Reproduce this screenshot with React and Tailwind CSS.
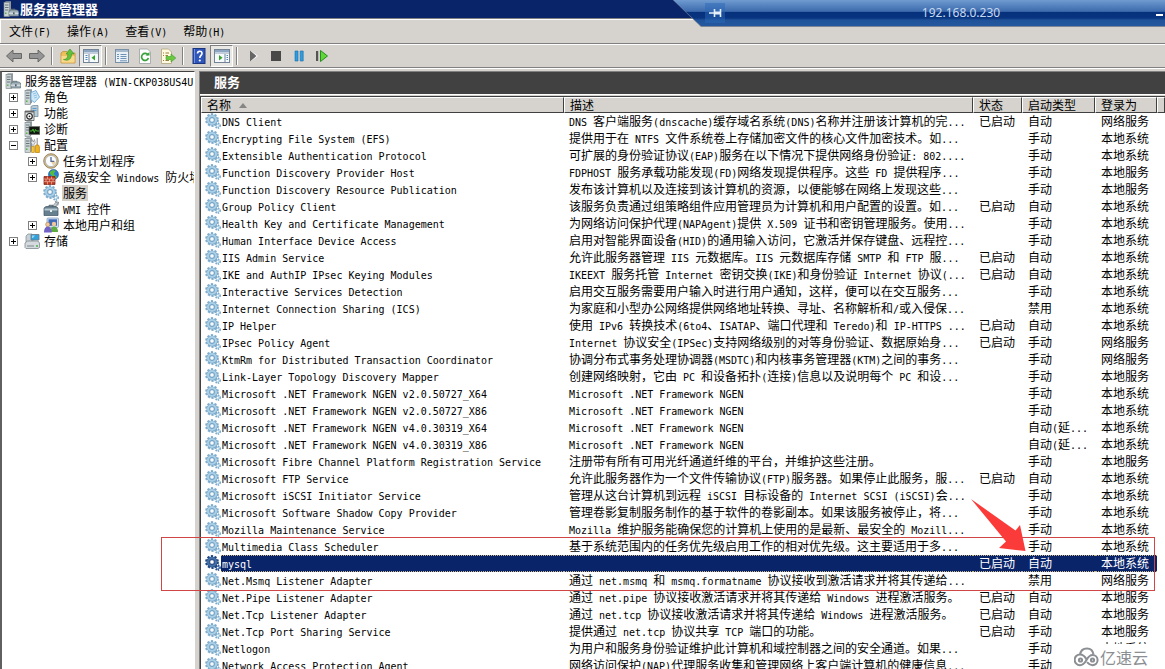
import React from 'react';

const services = [
  ['DNS Client', 'DNS 客户端服务(dnscache)缓存域名系统(DNS)名称并注册该计算机的完...', '已启动', '自动', '网络服务'],
  ['Encrypting File System (EFS)', '提供用于在 NTFS 文件系统卷上存储加密文件的核心文件加密技术。如...', '', '手动', '本地系统'],
  ['Extensible Authentication Protocol', '可扩展的身份验证协议(EAP)服务在以下情况下提供网络身份验证: 802....', '', '手动', '本地系统'],
  ['Function Discovery Provider Host', 'FDPHOST 服务承载功能发现(FD)网络发现提供程序。这些 FD 提供程序...', '', '手动', '本地服务'],
  ['Function Discovery Resource Publication', '发布该计算机以及连接到该计算机的资源，以便能够在网络上发现这些...', '', '手动', '本地服务'],
  ['Group Policy Client', '该服务负责通过组策略组件应用管理员为计算机和用户配置的设置。如...', '已启动', '自动', '本地系统'],
  ['Health Key and Certificate Management', '为网络访问保护代理(NAPAgent)提供 X.509 证书和密钥管理服务。使用...', '', '手动', '本地系统'],
  ['Human Interface Device Access', '启用对智能界面设备(HID)的通用输入访问，它激活并保存键盘、远程控...', '', '手动', '本地系统'],
  ['IIS Admin Service', '允许此服务器管理 IIS 元数据库。IIS 元数据库存储 SMTP 和 FTP 服...', '已启动', '自动', '本地系统'],
  ['IKE and AuthIP IPsec Keying Modules', 'IKEEXT 服务托管 Internet 密钥交换(IKE)和身份验证 Internet 协议(...', '已启动', '自动', '本地系统'],
  ['Interactive Services Detection', '启用交互服务需要用户输入时进行用户通知，这样，便可以在交互服务...', '', '手动', '本地系统'],
  ['Internet Connection Sharing (ICS)', '为家庭和小型办公网络提供网络地址转换、寻址、名称解析和/或入侵保...', '', '禁用', '本地系统'],
  ['IP Helper', '使用 IPv6 转换技术(6to4、ISATAP、端口代理和 Teredo)和 IP-HTTPS ...', '已启动', '自动', '本地系统'],
  ['IPsec Policy Agent', 'Internet 协议安全(IPSec)支持网络级别的对等身份验证、数据原始身...', '已启动', '手动', '网络服务'],
  ['KtmRm for Distributed Transaction Coordinator', '协调分布式事务处理协调器(MSDTC)和内核事务管理器(KTM)之间的事务...', '', '手动', '网络服务'],
  ['Link-Layer Topology Discovery Mapper', '创建网络映射，它由 PC 和设备拓扑(连接)信息以及说明每个 PC 和设...', '', '手动', '本地服务'],
  ['Microsoft .NET Framework NGEN v2.0.50727_X64', 'Microsoft .NET Framework NGEN', '', '手动', '本地系统'],
  ['Microsoft .NET Framework NGEN v2.0.50727_X86', 'Microsoft .NET Framework NGEN', '', '手动', '本地系统'],
  ['Microsoft .NET Framework NGEN v4.0.30319_X64', 'Microsoft .NET Framework NGEN', '', '自动(延...', '本地系统'],
  ['Microsoft .NET Framework NGEN v4.0.30319_X86', 'Microsoft .NET Framework NGEN', '', '自动(延...', '本地系统'],
  ['Microsoft Fibre Channel Platform Registration Service', '注册带有所有可用光纤通道纤维的平台，并维护这些注册。', '', '手动', '本地服务'],
  ['Microsoft FTP Service', '允许此服务器作为一个文件传输协议(FTP)服务器。如果停止此服务，服...', '已启动', '自动', '本地系统'],
  ['Microsoft iSCSI Initiator Service', '管理从这台计算机到远程 iSCSI 目标设备的 Internet SCSI (iSCSI)会...', '', '手动', '本地系统'],
  ['Microsoft Software Shadow Copy Provider', '管理卷影复制服务制作的基于软件的卷影副本。如果该服务被停止，将...', '', '手动', '本地系统'],
  ['Mozilla Maintenance Service', 'Mozilla 维护服务能确保您的计算机上使用的是最新、最安全的 Mozill...', '', '手动', '本地系统'],
  ['Multimedia Class Scheduler', '基于系统范围内的任务优先级启用工作的相对优先级。这主要适用于多...', '', '手动', '本地系统'],
  ['mysql', '', '已启动', '自动', '本地系统'],
  ['Net.Msmq Listener Adapter', '通过 net.msmq 和 msmq.formatname 协议接收到激活请求并将其传递给...', '', '禁用', '网络服务'],
  ['Net.Pipe Listener Adapter', '通过 net.pipe 协议接收激活请求并将其传递给 Windows 进程激活服务。', '已启动', '自动', '本地服务'],
  ['Net.Tcp Listener Adapter', '通过 net.tcp 协议接收激活请求并将其传递给 Windows 进程激活服务。', '已启动', '自动', '本地服务'],
  ['Net.Tcp Port Sharing Service', '提供通过 net.tcp 协议共享 TCP 端口的功能。', '已启动', '手动', '本地服务'],
  ['Netlogon', '为用户和服务身份验证维护此计算机和域控制器之间的安全通道。如果...', '', '手动', '本地系统'],
  ['Network Access Protection Agent', '网络访问保护(NAP)代理服务收集和管理网络上客户端计算机的健康信息...', '', '手动', '网络服务'],
];

const selectedName = 'mysql';

/* Latin runs are set in a monospace face half as wide as a Chinese character. */
function Mixed({ text }) {
  const runs = text.match(/[\x20-\x7e]+|[^\x20-\x7e]+/g) || [];
  return runs.map((run, i) =>
    /^[\x20-\x7e]/.test(run) ? (
      <span key={i} className="whitespace-pre font-['DejaVu_Sans_Mono',monospace] text-[10px] leading-none">{run}</span>
    ) : (
      <React.Fragment key={i}>{run}</React.Fragment>
    )
  );
}

function Icon({ children, size = 'size-4' }) {
  return (
    <svg viewBox="0 0 16 16" className={`${size} shrink-0`} aria-hidden="true">
      {children}
    </svg>
  );
}

function Gear({ selected }) {
  const edge = selected ? '#1f4680' : '#6f9fc2';
  const body = selected ? '#4470a8' : '#a9cfe6';
  return (
    <Icon>
      <circle cx="12.7" cy="12.6" r="2.3" fill="none" stroke={edge} strokeWidth="1.8" strokeDasharray="1.2 0.8" />
      <circle cx="12.7" cy="12.6" r="1.5" fill="#fff" stroke={body} strokeWidth="1.2" />
      <circle cx="7" cy="7" r="5.9" fill="none" stroke={selected ? edge : '#86b1cf'} strokeWidth="2" strokeDasharray="2.2 1.51" />
      <circle cx="7" cy="7" r="3.9" fill="#fff" stroke={edge} strokeWidth="3.2" />
      <circle cx="7" cy="7" r="3.9" fill="none" stroke={body} strokeWidth="2.4" />
      <circle cx="7" cy="7" r="2.3" fill={selected ? '#fff' : '#f4fafd'} stroke={selected ? '#12356f' : '#5d90b8'} strokeWidth=".8" />
    </Icon>
  );
}

function Tower({ x = 1 }) {
  return (
    <g>
      <path d={`M${x} 1.5l2-1.2h5v13l-1.5 2H${x}z`} fill="#8f9a9f" />
      <rect x={x} y="1.5" width="5.5" height="14" fill="#cbd3d5" stroke="#7c878c" strokeWidth=".6" />
      <path d={`M${x + 1} 4h3.5M${x + 1} 6.5h3.5M${x + 1} 9h3.5`} stroke="#67757c" />
      <rect x={x + 1} y="11.5" width="1.5" height="1.5" fill="#58b54b" />
    </g>
  );
}

const icons = {
  server: (
    <Icon>
      <Tower />
      <path d="M8 9.5V8.3h4v1.2" fill="none" stroke="#69777c" />
      <path d="M6 10l2-1h6l1.5 1v5H6z" fill="#9fb0b9" stroke="#5e6e76" strokeWidth=".7" />
      <path d="M6 12.2h9.5" stroke="#e8eef1" />
      <rect x="10" y="11.3" width="1.6" height="2" fill="#506068" />
    </Icon>
  ),
  roles: (
    <Icon>
      <Tower />
      <path d="M7 3.5l5-2 3.5 6.5-5 5.5L7 11z" fill="#cfe8f8" stroke="#5fa2d3" strokeWidth=".8" />
      <path d="M9 5l3-1M9.5 7l3.5-1M10 9l3-1" stroke="#74b2dc" strokeWidth=".7" />
    </Icon>
  ),
  features: (
    <Icon>
      <path d="M7 1.5L9 .5h5v11h-7z" fill="#b9cbd6" stroke="#6d8491" strokeWidth=".7" />
      <path d="M8.5 3.5h4M8.5 5.5h4" stroke="#5b9bd0" />
      <path d="M1 6h9v9.5H1z" fill="#e0e5e7" stroke="#555" strokeWidth=".8" />
      <path d="M1 6h9v1.5H1z" fill="#666" />
      <circle cx="5.5" cy="11.3" r="2.8" fill="#fff" stroke="#222" strokeWidth="1.2" />
      <circle cx="5.5" cy="11.3" r=".9" fill="#222" />
    </Icon>
  ),
  diag: (
    <Icon>
      <Tower />
      <rect x="5" y="5.5" width="10.8" height="8" fill="#101810" stroke="#777" strokeWidth=".7" />
      <path d="M6 10h2l1-2 1.3 3.5 1.2-3 1 1.5h2.8" fill="none" stroke="#49c634" strokeWidth=".9" />
    </Icon>
  ),
  config: (
    <Icon>
      <Tower />
      <path d="M8 15V7.500L7 5.500l1-3 1.300 2.500 1.200-2.500.7 3-1.200 2V15z" fill="#e4e8ea" stroke="#777" strokeWidth=".6" />
      <path d="M13.200 1v7" stroke="#999" strokeWidth="1.200" />
      <path d="M11.800 8h2.800l.8 2v5.500h-4V10z" fill="#f2b51e" stroke="#b57f0b" strokeWidth=".7" />
      <path d="M7.500 9.500h2.800v6H7.500z" fill="#f6c63c" stroke="#b57f0b" strokeWidth=".5" />
    </Icon>
  ),
  clock: (
    <Icon>
      <circle cx="8" cy="8" r="7.3" fill="#d8bd86" stroke="#86734d" strokeWidth=".8" />
      <circle cx="8" cy="8" r="5.6" fill="#fafcff" stroke="#9aa5b3" strokeWidth=".7" />
      <path d="M8 4v4.3h3.3" fill="none" stroke="#3f5d8b" strokeWidth="1.2" />
      <path d="M12.8 8.8a5 5 0 0 1-2.7 3.4L8 8.5z" fill="#dca24a" opacity=".5" />
    </Icon>
  ),
  firewall: (
    <Icon>
      <circle cx="10.5" cy="5.5" r="5" fill="#2a7fd0" stroke="#175390" strokeWidth=".6" />
      <path d="M7 3c2-2.5 5-2 5.5-1s-2 1-1.5 3 3 2 3 3.5l-3 1C9 8 9.5 6 7 5z" fill="#54bd3d" />
      <path d="M1 7.5h11v8H1z" fill="#bd3a24" stroke="#7b2114" strokeWidth=".7" />
      <path d="M1 10h11M1 12.7h11M4.5 7.5V10M8.5 7.5V10M6.5 10v2.7M10 10v2.7M3 10v2.7M4.5 12.7v2.8M8.5 12.7v2.8" stroke="#ecb6a4" strokeWidth=".7" />
    </Icon>
  ),
  wmi: (
    <Icon>
      <path d="M9 6l4-5 1.5 1.5L12 7z" fill="#c6ced2" stroke="#6b7980" strokeWidth=".6" />
      <path d="M12 .5l3.5 1-1 3" fill="none" stroke="#87949b" strokeWidth="1.2" />
      <path d="M1 7l2-1.5h10L15 7v7.5H1z" fill="#66808f" stroke="#3d525e" strokeWidth=".7" />
      <path d="M1.5 7.5h13v2h-13z" fill="#b8c9d2" />
      <path d="M6 5.5V4.3h4v1.2" fill="none" stroke="#4c606b" />
      <rect x="7" y="9" width="2" height="2" fill="#e7eef1" />
    </Icon>
  ),
  users: (
    <Icon>
      <rect x="4" y="1" width="11.5" height="9.5" rx="1" fill="#cfe0f4" stroke="#8095b5" strokeWidth=".7" />
      <rect x="5.5" y="2.3" width="8.5" height="6.5" fill="#4169b8" />
      <circle cx="11" cy="7" r="2.2" fill="#f1c79a" />
      <path d="M7.5 15c0-4 1.500-5.500 3.500-5.500s4 1.500 4 5.500z" fill="#5faa41" />
      <circle cx="4.8" cy="7.5" r="2.2" fill="#f1c79a" stroke="#83562c" strokeWidth=".4" />
      <path d="M1 15.5c0-4 1.600-5.700 3.800-5.700s3.900 1.700 3.900 5.700z" fill="#7262c8" />
    </Icon>
  ),
  storage: (
    <Icon>
      <path d="M2 3l2-2h4l1 2v6H2z" fill="#c7d0d4" stroke="#7c8a91" strokeWidth=".7" />
      <path d="M7 1.5h8v5.5H7z" fill="#31a1de" stroke="#69808d" strokeWidth=".9" />
      <path d="M8 2.5h3L9 5H8z" fill="#92d6f5" />
      <path d="M1 10l2.5-2h10.5l1.5 2v4.5l-1.5 1H2l-1-1z" fill="#d4dadd" stroke="#7d8991" strokeWidth=".8" />
      <path d="M3 13h7" stroke="#7c878e" />
      <circle cx="13" cy="13" r=".9" fill="#3dae37" />
    </Icon>
  ),
  gear: <Gear />,
};

const tree = [
  { level: 0, icon: 'server', label: '服务器管理器 (WIN-CKP038US4U' },
  { level: 1, icon: 'roles', label: '角色', toggle: '+' },
  { level: 1, icon: 'features', label: '功能', toggle: '+' },
  { level: 1, icon: 'diag', label: '诊断', toggle: '+' },
  { level: 1, icon: 'config', label: '配置', toggle: '-' },
  { level: 2, icon: 'clock', label: '任务计划程序', toggle: '+' },
  { level: 2, icon: 'firewall', label: '高级安全 Windows 防火墙', toggle: '+' },
  { level: 2, icon: 'gear', label: '服务', selected: true },
  { level: 2, icon: 'wmi', label: 'WMI 控件' },
  { level: 2, icon: 'users', label: '本地用户和组', toggle: '+' },
  { level: 1, icon: 'storage', label: '存储', toggle: '+' },
];

const indents = ['pl-[3px]', 'pl-[7px]', 'pl-[26px]'];

function TreeRow({ item }) {
  return (
    <li className={`flex h-4 items-center whitespace-nowrap ${indents[item.level]}`}>
      {item.level > 0 && (
        <span className="flex w-[15px] shrink-0 items-center">
          {item.toggle && (
            <button type="button" aria-label={item.label} className="block size-[9px]">
              <svg viewBox="0 0 9 9" className="block size-[9px]" shapeRendering="crispEdges">
                <rect x=".5" y=".5" width="8" height="8" fill="#fff" stroke="#808080" />
                <path d={item.toggle === '+' ? 'M2 4.5h5M4.5 2v5' : 'M2 4.5h5'} stroke="#000" />
              </svg>
            </button>
          )}
        </span>
      )}
      {icons[item.icon]}
      <span className={`ml-[3px] h-4 px-px leading-4 ${item.selected ? 'bg-[#d4d0c8]' : ''}`}>
        <Mixed text={item.label} />
      </span>
    </li>
  );
}

function Tool({ label, pressed, children }) {
  return (
    <button
      type="button"
      aria-label={label}
      className={`flex h-[22px] w-[23px] shrink-0 items-center justify-center ${
        pressed ? 'border border-t-[#808080] border-r-white border-b-white border-l-[#808080] bg-[#eae8e4]' : ''
      }`}
    >
      {children}
    </button>
  );
}

function Divider() {
  return <span className="mx-[3px] h-[18px] w-0.5 shrink-0 border-r border-l border-r-white border-l-[#808080]" />;
}

const arrowPath = 'M.5 8L7 2v3.500h8.500v5H7V14z';

function PaneIcon({ right }) {
  return (
    <Icon>
      <rect x=".5" y="1.5" width="15" height="13" fill="#f7fafc" stroke="#748497" />
      <path d="M1 2h14v2.5H1z" fill="#8fa6c2" />
      <path d="M1 5.5h14" stroke="#c0ccd8" />
      <path d={right ? 'M11 6v8' : 'M6 6v8'} stroke="#748497" />
      <path d={right ? 'M12.5 7.5h1.5M12.5 9.5h1.5M12.5 11.5h1.5' : 'M2.5 7.5h2M2.5 9.5h2M2.5 11.5h2'} stroke="#4f86bd" />
      <path d={right ? 'M5 7l3.5 2.8L5 12.5z' : 'M12 7L8.5 9.8l3.5 2.7z'} fill="#35a52a" />
    </Icon>
  );
}

function Toolbar() {
  return (
    <div role="toolbar" className="flex h-[23px] items-center border-t border-white pl-0.5">
      <Tool label="后退">
        <Icon><path d={arrowPath} fill="#959595" stroke="#606060" strokeWidth=".9" /></Icon>
      </Tool>
      <Tool label="前进">
        <Icon><path d={arrowPath} fill="#959595" stroke="#606060" strokeWidth=".9" transform="matrix(-1 0 0 1 16 0)" /></Icon>
      </Tool>
      <Divider />
      <Tool label="向上">
        <Icon>
          <path d="M1 5l2-1.5h4L8.5 5H15v10H1z" fill="#f0c15b" stroke="#c29135" strokeWidth=".8" />
          <path d="M1.5 8h13v6.5h-13z" fill="#f8d98a" />
          <path d="M3.500 11.500c3.500 0 4.300-2.500 4.300-5.500H6L10 1l4 5h-2.500c0 5-3 7.500-8 5.500z" fill="#62c23c" stroke="#3b8e24" strokeWidth=".6" />
        </Icon>
      </Tool>
      <Tool label="显示控制台树" pressed><PaneIcon /></Tool>
      <Divider />
      <Tool label="属性">
        <Icon>
          <rect x="1.5" y="1.5" width="13" height="13" fill="#e9f0f6" stroke="#7890a8" />
          <path d="M2 2h12v2H2z" fill="#a5b8cc" />
          <path d="M3 6.5h2M6.5 6.5h6M3 8.5h2M6.5 8.5h6M3 10.5h2M6.5 10.5h6M6 12.8h7" stroke="#6d92b8" />
        </Icon>
      </Tool>
      <Tool label="刷新">
        <Icon>
          <path d="M2.5 1h8l3 3v11.500h-11z" fill="#fcfdfc" stroke="#98a1a1" strokeWidth=".8" />
          <path d="M11 7a3.500 3.500 0 1 0 .4 3" fill="none" stroke="#38a03a" strokeWidth="1.7" />
          <path d="M8.5 7.5h4V4z" fill="#38a03a" />
        </Icon>
      </Tool>
      <Tool label="导出列表">
        <Icon>
          <path d="M1.5 1h7l3 3v11.500h-10z" fill="#fff9df" stroke="#b1a680" strokeWidth=".8" />
          <path d="M3 5h1M5.5 5H9M3 7.5h1M5.5 7.5H8M3 12.5h1M5.5 12.5H9" stroke="#96813d" />
          <path d="M6 8.500h5V6l4.800 4-4.800 4v-2.500H6z" fill="#69c93f" stroke="#3f9a28" strokeWidth=".6" />
        </Icon>
      </Tool>
      <Divider />
      <Tool label="帮助">
        <Icon>
          <rect x="2" y=".5" width="12" height="15" fill="#2f55bb" stroke="#1b357e" />
          <path d="M3.5 1v14" stroke="#6f8fe0" />
          <path d="M6.5 5.500C6.500 2.500 11 2.500 11 5.200 11 7.500 8.800 7.300 8.800 10" fill="none" stroke="#fff" strokeWidth="1.6" />
          <circle cx="8.8" cy="12.5" r="1.1" fill="#fff" />
        </Icon>
      </Tool>
      <Tool label="显示操作窗格" pressed><PaneIcon right /></Tool>
      <Divider />
      <Tool label="启动服务">
        <Icon><path d="M5.500 2.500L13 8l-7.500 5.500z" fill="#fff" /><path d="M5 2.500L11.500 8 5 13.500z" fill="#666" /></Icon>
      </Tool>
      <Tool label="停止服务">
        <Icon><rect x="3" y="3" width="10" height="10" fill="#484848" /></Icon>
      </Tool>
      <Tool label="暂停服务">
        <Icon><path d="M4 3h3v10H4zM9.200 3h3v10h-3z" fill="#2d9de0" stroke="#176ca8" strokeWidth=".6" /></Icon>
      </Tool>
      <Tool label="重新启动服务">
        <Icon>
          <path d="M2 3h2.200v10H2z" fill="#555" />
          <path d="M6.500 2.500L13.500 8l-7 5.500z" fill="#5fd63c" stroke="#278d1b" />
        </Icon>
      </Tool>
    </div>
  );
}

const columns = ['名称', '描述', '状态', '启动类型', '登录为', ''];

function ServiceTable() {
  return (
    <table className="w-full table-fixed border-collapse">
      <colgroup>
        <col className="w-[363px]" />
        <col />
        <col className="w-[49px]" />
        <col className="w-[73px]" />
        <col className="w-[62px]" />
        <col className="w-2" />
      </colgroup>
      <thead>
        <tr className="h-4">
          {columns.map((name, i) => (
            <th key={i} className="p-0 text-left font-normal">
              <div className="h-4 overflow-hidden border-t border-r border-b border-l border-t-white border-r-[#404040] border-b-[#404040] border-l-white bg-[#d6d3ce]">
                {name && (
                  <button type="button" className="flex h-[14px] w-full items-center gap-2 pl-[5px] leading-[14px] whitespace-nowrap">
                    {name}
                    {i === 0 && (
                      <svg viewBox="0 0 8 5" className="h-[5px] w-2" aria-hidden="true"><path d="M4 0l4 5H0z" fill="#858585" /></svg>
                    )}
                  </button>
                )}
              </div>
            </th>
          ))}
        </tr>
      </thead>
      <tbody>
        {services.map(([name, ...cells]) => {
          const selected = name === selectedName;
          const band = selected
            ? 'border-y border-dotted border-[#c9b98a] bg-[#0a246a] text-white leading-[14px]'
            : 'leading-4';
          return (
            <tr key={name} className="h-[17px]">
              <td className="p-0">
                <div className="flex h-[17px] pl-1">
                  <Gear selected={selected} />
                  <span className={`h-[17px] flex-1 overflow-hidden pl-px whitespace-nowrap ${band}`}><Mixed text={name} /></span>
                </div>
              </td>
              {cells.map((cell, i) => (
                <td key={i} className="p-0">
                  <div className={`h-[17px] overflow-hidden whitespace-nowrap ${i === 0 ? 'pl-[5px]' : 'pl-1.5'} ${band}`}><Mixed text={cell} /></div>
                </td>
              ))}
              <td className="p-0" />
            </tr>
          );
        })}
      </tbody>
    </table>
  );
}

function ConnectionBar() {
  return (
    <div className="absolute top-0 right-0 h-[27px] w-[492px] bg-[#7d8794] [clip-path:polygon(0_0,100%_0,100%_100%,28px_100%)]">
      <div className="flex h-[26px] items-center bg-[linear-gradient(#6f9bd0_0,#3e6cae_11px,#2c5a9e_12px,#06307b_12px,#083480_18px,#1f5298_20px,#24589e_25px)] pl-8 text-[#c7d9f0] [clip-path:polygon(0_0,100%_0,100%_100%,28px_100%)]">
        <button type="button" aria-label="固定" className="flex h-5 w-5 items-center justify-center bg-[#2a67b8]/50">
          <svg viewBox="0 0 14 10" className="h-[10px] w-[14px]" aria-hidden="true">
            <path d="M1 5h5M6.5 1v8M12.5 1v8" stroke="#e5f0fc" strokeWidth="1.6" />
            <path d="M6.5 3.5h6v3h-6z" fill="#e5f0fc" />
          </svg>
        </button>
        <span className="flex-1 pl-24 text-center font-['Noto_Sans',sans-serif] text-xs">192.168.0.230</span>
        <button type="button" aria-label="最小化" className="flex h-5 w-16 items-center justify-end pr-0.5">
          <span className="mt-1 h-0.5 w-[7px] bg-white" />
        </button>
      </div>
    </div>
  );
}

function Annotations() {
  return (
    <>
      <div className="pointer-events-none absolute top-[537px] right-[10px] left-[161px] h-[54px] border border-[#cf4644]" />
      <svg viewBox="0 0 58 54" className="pointer-events-none absolute top-[498px] right-[137px] h-[54px] w-[58px]" aria-hidden="true">
        <path d="M1 1L45.5 32.500 50 27 55.500 53 29 50 36 43.500z" fill="#fb3b39" />
      </svg>
      <div className="absolute right-0 bottom-0 flex h-[25px] w-[95px] items-center gap-px bg-white pl-1 font-['Noto_Sans_CJK_SC',sans-serif] text-base leading-6 text-[#8b8e92]">
        <svg viewBox="0 0 25 20" className="h-5 w-[25px]" fill="none" stroke="#8b8e92" strokeWidth="2" aria-hidden="true">
          <path d="M6 8C6.500 3.500 9.500 1.500 13 1.500c4 0 6 2.500 6.500 6" />
          <path d="M12.500 12.500c-1.500-3-3.500-5-6.500-5a5.300 5.300 0 0 0 0 10.700c3 0 4.500-1.700 6.500-5.200s3.500-5 6-5a5 5 0 0 1 0 10.200c-2.500 0-4-1.200-5.500-3" />
          <circle cx="6.500" cy="13" r="1.6" />
          <circle cx="18.500" cy="13" r="1.6" />
        </svg>
        <span>亿速云</span>
      </div>
    </>
  );
}

const menus = ['文件(F)', '操作(A)', '查看(V)', '帮助(H)'];

export default function App() {
  return (
    <div className="relative flex h-screen flex-col overflow-hidden bg-[#d6d3ce] font-['Noto_Sans_CJK_SC',sans-serif] text-xs text-black">
      <header className="flex h-[18px] shrink-0 items-center gap-px bg-[#0a246a] pl-[3px] text-[13px] leading-4 font-bold text-white">
        {icons.server}
        <h1>服务器管理器</h1>
      </header>
      <div className="shrink-0 border-t border-[#808080]">
        <nav className="flex h-6 items-center gap-4 border-t border-l border-white pb-0.5 pl-2">
          {menus.map((m) => (
            <button key={m} type="button" className="leading-5 whitespace-nowrap"><Mixed text={m} /></button>
          ))}
        </nav>
        <div className="border-y border-[#808080]"><Toolbar /></div>
        <div className="h-px bg-white" />
      </div>
      <div className="flex min-h-0 flex-1 pt-0.5">
        <aside className="w-[195px] shrink-0 overflow-hidden border-t border-r border-l-2 border-t-[#404040] border-r-white border-l-[#606060] bg-white">
          <ul className="pt-px">
            {tree.map((item) => <TreeRow key={item.label} item={item} />)}
          </ul>
        </aside>
        <main className="ml-1 flex min-w-0 flex-1 flex-col overflow-hidden border-t border-l border-t-[#808080] border-l-[#808080]">
          <h2 className="h-[22px] shrink-0 bg-[#424142] pl-3.5 text-[13px] leading-5 font-bold text-white">服务</h2>
          <div className="h-0.5 shrink-0 border-t border-white" />
          <div className="min-h-0 flex-1 overflow-hidden border-t border-l border-[#404040] bg-white">
            <ServiceTable />
          </div>
        </main>
      </div>
      <ConnectionBar />
      <Annotations />
    </div>
  );
}
